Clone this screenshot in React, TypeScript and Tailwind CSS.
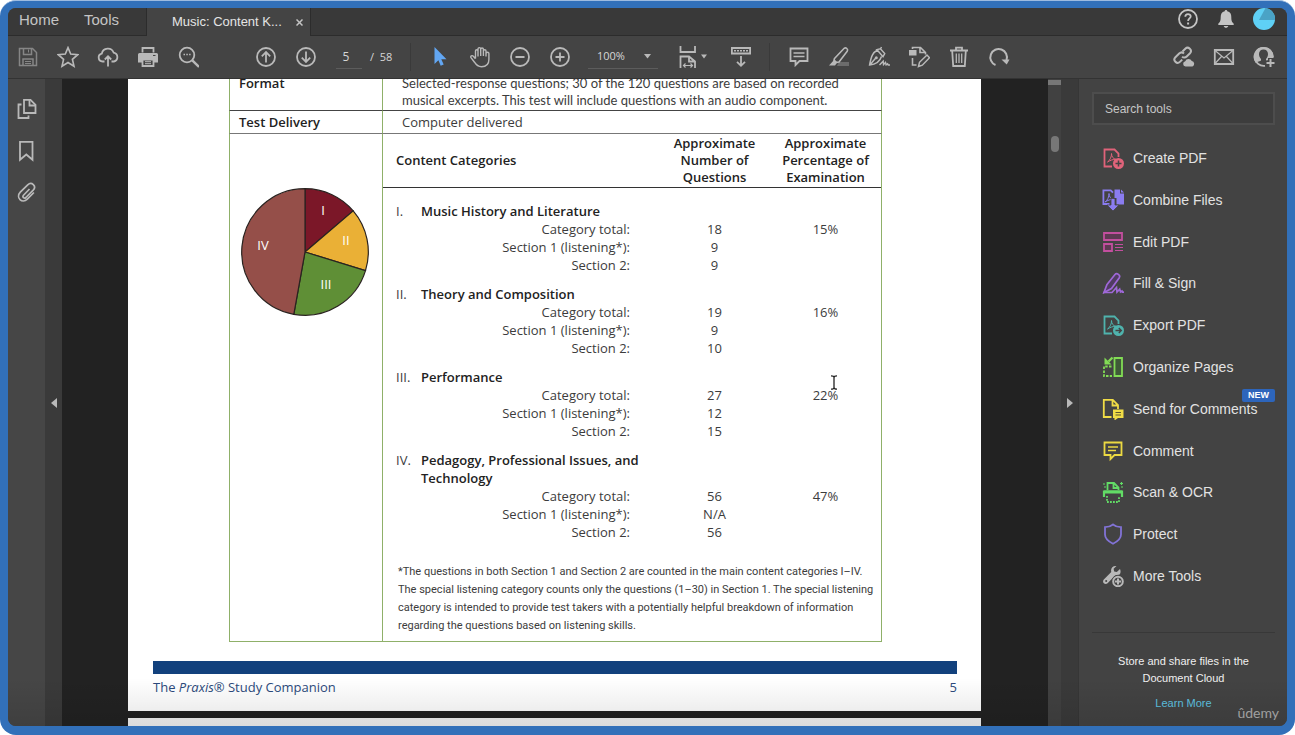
import type { ReactNode } from 'react';

type Sub = { label: string; count: string; percent?: string };
type Category = { numeral: string; name: ReactNode; rows: Sub[] };

const categories: Category[] = [
  {
    numeral: 'I.',
    name: 'Music History and Literature',
    rows: [
      { label: 'Category total:', count: '18', percent: '15%' },
      { label: 'Section 1 (listening*):', count: '9' },
      { label: 'Section 2:', count: '9' },
    ],
  },
  {
    numeral: 'II.',
    name: 'Theory and Composition',
    rows: [
      { label: 'Category total:', count: '19', percent: '16%' },
      { label: 'Section 1 (listening*):', count: '9' },
      { label: 'Section 2:', count: '10' },
    ],
  },
  {
    numeral: 'III.',
    name: 'Performance',
    rows: [
      { label: 'Category total:', count: '27', percent: '22%' },
      { label: 'Section 1 (listening*):', count: '12' },
      { label: 'Section 2:', count: '15' },
    ],
  },
  {
    numeral: 'IV.',
    name: (
      <>
        Pedagogy, Professional Issues, and
        <br />
        Technology
      </>
    ),
    rows: [
      { label: 'Category total:', count: '56', percent: '47%' },
      { label: 'Section 1 (listening*):', count: 'N/A' },
      { label: 'Section 2:', count: '56' },
    ],
  },
];

function Icon({ children, className = '' }: { children: ReactNode; className?: string }) {
  return (
    <svg
      width="22"
      height="22"
      viewBox="0 0 22 22"
      fill="none"
      stroke="currentColor"
      strokeWidth="1.8"
      className={`shrink-0 ${className}`}
      aria-hidden="true"
    >
      {children}
    </svg>
  );
}

const icons = {
  save: (
    <Icon className="text-[#868686]">
      <path d="M2.5 2.5h13l4 4v13h-17z" strokeWidth="1.5" />
      <path d="M6.5 2.5v6h8v-6M6 19.5V13h10v6.5" strokeWidth="1.5" />
      <path d="M11.5 3.5v3M8 15.5h6M8 17.5h6" strokeWidth="1" />
    </Icon>
  ),
  star: (
    <Icon>
      <path d="M11 1.6l2.7 6.5 7 .6-5.3 4.6 1.6 6.9-6-3.7-6 3.7 1.6-6.9L1.3 8.7l7-.6z" strokeWidth="1.6" />
    </Icon>
  ),
  upload: (
    <Icon>
      <path d="M7.5 15.5H5.6A4 4 0 0 1 4.8 7.6 6.2 6.2 0 0 1 16.7 6.7a4.5 4.5 0 0 1 .2 8.8H14.5" />
      <path d="M11 20.5V11M7.8 13.5l3.2-3.2 3.2 3.2" />
    </Icon>
  ),
  print: (
    <Icon>
      <path d="M5.5 6.5V2h11v4.5" />
      <path d="M2.5 7h17A1.5 1.5 0 0 1 21 8.5v8h-4v-3H5v3H1v-8A1.5 1.5 0 0 1 2.5 7z" fill="currentColor" stroke="none" />
      <path d="M5.5 13.5h11V20h-11z" />
      <path d="M8 15.7h6M8 17.7h6" strokeWidth="1" />
      <path d="M16 9.5h2.5" stroke="#444" strokeWidth="1.2" />
    </Icon>
  ),
  search: (
    <Icon>
      <circle cx="10" cy="9" r="7.3" />
      <path d="M15.3 14.3L22 21" strokeWidth="2.4" />
      <path d="M6.5 8.5H8M9.3 8.5h1.5M12.1 8.5h1.5" strokeWidth="1.4" />
    </Icon>
  ),
  up: (
    <Icon>
      <circle cx="11" cy="11" r="9" />
      <path d="M11 16.5v-10M6.8 10.3L11 6.1l4.2 4.2" />
    </Icon>
  ),
  down: (
    <Icon>
      <circle cx="11" cy="11" r="9" />
      <path d="M11 5.5v10M6.8 11.7l4.2 4.2 4.2-4.2" />
    </Icon>
  ),
  pointer: (
    <Icon className="text-[#62a6f2]">
      <path d="M5.5 1v17l3.9-3.7 2.3 5.4 3-1.3-2.4-5.2h5.2z" fill="currentColor" stroke="none" />
    </Icon>
  ),
  hand: (
    <Icon>
      <path
        d="M6.5 12.5V5C6.5 3.3 9 3.3 9 5v5.5V3c0-1.8 2.7-1.8 2.7 0v7V3.3c0-1.8 2.7-1.8 2.7 0V10V5c0-1.7 2.6-1.7 2.6 0v5.5M17 7.5c0-1.7 2.9-1.7 2.9 0v6c0 4.3-2.3 7.2-7.4 7.2-4 0-5.5-2-7-4.5L2 11.7c-1-1.6 1.1-2.8 2.3-1.5l2.2 2.6"
        strokeWidth="1.4"
      />
    </Icon>
  ),
  minus: (
    <Icon>
      <circle cx="11" cy="11" r="9" />
      <path d="M6.5 11h9" />
    </Icon>
  ),
  plus: (
    <Icon>
      <circle cx="11" cy="11" r="9" />
      <path d="M6.5 11h9M11 6.5v9" />
    </Icon>
  ),
  fit: (
    <svg width="28" height="22" viewBox="0 0 28 22" fill="none" stroke="currentColor" strokeWidth="1.8" aria-hidden="true">
      <path d="M1.5 0v6H16V0M1.5 22V10.5H10l6 5V22M10 10.5v5h6" />
      <path d="M4 19.5h10M6.5 17.5l-2 2 2 2M11.5 17.5l2 2-2 2" strokeWidth="1.2" />
      <path d="M22 8.5h6l-3 4z" fill="currentColor" stroke="none" />
    </svg>
  ),
  reading: (
    <Icon>
      <path d="M1.9 2h18.2v5.5H1.9z" />
      <path d="M4 4.8h14" strokeWidth="1.6" strokeDasharray="2 1" />
      <path d="M11 10v9.5M7 15.8l4 4 4-4" />
    </Icon>
  ),
  comment: (
    <Icon>
      <path d="M2.5 2.5h17V15h-8l-4 4v-4h-5z" />
      <path d="M5.5 7h11M5.5 10.5h11" strokeWidth="1.4" />
    </Icon>
  ),
  highlight: (
    <Icon>
      <path d="M11 16h10v4H9z" fill="#6c6c6c" stroke="none" />
      <path d="M6.5 12.5L16.2 2.3c1.6-1.4 4.4.9 3 3L11 16l-2.5.3L6 14.2z" strokeWidth="1.6" />
      <path d="M6 14l3.2 2.6L7 19.5H1z" fill="currentColor" stroke="none" />
    </Icon>
  ),
  sign: (
    <Icon>
      <path d="M9.5 4C5 6.5 3.3 9.5 1.6 19c5.5-.5 10-2.5 11.9-8.5M8.8 3.6l6.2 7.2 1.7-3.2-4.3-4.8zM12.5 3l1-2M2 18.8l6-7" strokeWidth="1.5" />
      <circle cx="8.3" cy="11.7" r="1.5" fill="currentColor" stroke="none" />
      <path d="M11.5 19l3.7-3.8.3 3.5 2-2.2.6 2.3 1.5-1 .6 1.2H22" strokeWidth="1.4" />
    </Icon>
  ),
  edit: (
    <Icon>
      <path d="M1 4h7.5v5.5H1z" fill="currentColor" stroke="none" />
      <path d="M4.5 3V1.5h8l5 5v2M12 1.5v5h5M4.5 12v7h4" strokeWidth="1.6" />
      <path d="M10.5 20.5l1-4.2L19 9l2.5 2.7-7.2 7.5z" strokeWidth="1.5" />
    </Icon>
  ),
  trash: (
    <Icon>
      <path d="M2 4.5h18M8 4V1.6h6V4" />
      <path d="M4.2 5l1 15h11.6l1-15" />
      <path d="M8.3 7.5V17M11 7.5V17M13.7 7.5V17" strokeWidth="1.3" />
    </Icon>
  ),
  rotate: (
    <Icon>
      <path d="M7.5 19A8.3 8.3 0 1 1 18.5 14" strokeWidth="2" />
      <path d="M13.5 13.5h8l-2.8 5z" fill="currentColor" stroke="none" />
    </Icon>
  ),
  link: (
    <Icon>
      <path d="M9.5 5.5l2.8-2.8c3-2.8 7.5 1.5 4.7 4.5l-3.3 3.3c-1.5 1.5-3.5 1.2-4.6.1" strokeWidth="2" />
      <path d="M11 7.5C9.5 6 7.5 6.2 6.2 7.5l-3.8 3.8c-3 3 1.5 7.5 4.5 4.6l2.3-2.3" strokeWidth="2" />
      <path d="M12.5 20.5a2.7 2.7 0 0 1-.3-5.3 3.6 3.6 0 0 1 6.6-.2 2.9 2.9 0 0 1 .7 5.5z" fill="currentColor" stroke="none" />
    </Icon>
  ),
  mail: (
    <Icon>
      <path d="M1.8 4h18.4v14H1.8z" />
      <path d="M2 4.5l9 7.5 9-7.5M2 17.5l6.5-7M20 17.5l-6.5-7" strokeWidth="1.2" />
    </Icon>
  ),
  addUser: (
    <Icon>
      <path d="M12 19.8A9 9 0 1 1 19.8 11" />
      <path
        d="M10.5 1a9.8 9.8 0 0 0-7.8 15.8c1.5-1.2 4.8-1.6 5.3-2.3V13C6.5 11.5 6 9.8 6 8c0-2.8 1.7-4.6 4.5-4.6S15 5.2 15 8c0 1.8-.5 3.5-2 5v1.5h2V12h5.5A9.8 9.8 0 0 0 10.5 1z"
        fill="currentColor"
        stroke="none"
      />
      <path d="M17.5 12.5v8M13.5 16.5h8" stroke="#444" strokeWidth="4" />
      <path d="M17.5 13v8M13.5 17h8" strokeWidth="2" />
    </Icon>
  ),
  help: (
    <Icon>
      <circle cx="11" cy="11" r="9" />
      <path d="M8.3 8.7c0-3.6 5.5-3.3 5.4-.3 0 2-2.6 2-2.6 4.5" />
      <path d="M10.1 14.5h2v2h-2z" fill="currentColor" stroke="none" />
    </Icon>
  ),
  bell: (
    <Icon>
      <path
        d="M11 2c.9 0 1.3.6 1.3 1.3 3 .7 4 2.9 4 5.7 0 4 .7 5 2.4 6.7V17H3.3v-1.3C5 14 5.7 13 5.7 9c0-2.8 1-5 4-5.7C9.7 2.6 10.1 2 11 2zM8.7 18h4.6c-.5 2.4-4.1 2.4-4.6 0z"
        fill="currentColor"
        stroke="none"
      />
    </Icon>
  ),
  pages: (
    <Icon>
      <path d="M8 1.8h6.5l5 5V15H8z" />
      <path d="M13.5 2v5.5H19M5.5 6.5h-3V20h10v-2.5" />
    </Icon>
  ),
  bookmark: (
    <Icon>
      <path d="M4 1.8h12.5v18l-6.2-5.3L4 19.8z" />
    </Icon>
  ),
  clip: (
    <Icon>
      <path
        d="M13.5 7l-6 6.2c-1.5 1.8.7 3.8 2.4 2.3l7.3-7.4c3.7-4-1.6-9-5.5-5.3L4.3 10.2c-5 5.4 1.9 12 7 7l6.6-6.7"
        strokeWidth="1.7"
      />
    </Icon>
  ),
};

const acrobat = 'M5.5 15c2.5-1.5 4.2-5.5 4-8.5 0 3 1.7 5.5 4.5 5.8-3 0-5.8 1-8.5 2.7z';

const tools = [
  {
    name: 'Create PDF',
    icon: (
      <Icon className="text-[#e0637a]">
        <path d="M10 19.5H2.5v-17h10l4 4V10" />
        <path d={acrobat} strokeWidth="1" />
        <circle cx="16.5" cy="16.5" r="5.5" fill="currentColor" stroke="none" />
        <path d="M16.5 13.5v6M13.5 16.5h6" stroke="#434343" strokeWidth="1.5" />
      </Icon>
    ),
  },
  {
    name: 'Combine Files',
    icon: (
      <Icon className="text-[#8a7cf0]">
        <path d="M7.5 15H1.4V1.4h7.3L11 3.7" />
        <path d={acrobat} strokeWidth="1" transform="translate(-2.5 -2)" />
        <path d="M12.5.5H18v4h4v11h-7.5V9h-2z" fill="currentColor" stroke="none" />
        <path d="M19 .5l3 3h-3z" fill="currentColor" stroke="none" />
        <path d="M9 9.5h4V16h4l-6 6-6-6h4z" fill="currentColor" stroke="#434343" strokeWidth=".8" />
      </Icon>
    ),
  },
  {
    name: 'Edit PDF',
    icon: (
      <Icon className="text-[#c24f9e]">
        <path d="M2 2h18v7H2zM2 13h8v7H2z" fill="#5d3a53" />
        <path d="M13 13.5h8M13 16.5h8M13 19.5h8" strokeWidth="1.2" />
      </Icon>
    ),
  },
  {
    name: 'Fill & Sign',
    icon: (
      <Icon className="text-[#9f68d8]">
        <path d="M5 12.5l8-10c1.8-2 5.8.5 4.3 3.2L9.5 16.5l-7.5 4z" fill="#503c62" strokeWidth="1.7" />
        <path d="M1 20.5h9l4.5-5 .5 4.5 2.7-2.8.8 2.8 1.5-1 .5 1.2H22" strokeWidth="1.7" />
      </Icon>
    ),
  },
  {
    name: 'Export PDF',
    icon: (
      <Icon className="text-[#4fb3ad]">
        <path d="M10 19.5H2.5v-17h10l4 4V10" />
        <path d={acrobat} strokeWidth="1" />
        <circle cx="16.5" cy="16.5" r="5.5" fill="currentColor" stroke="none" />
        <path d="M13.5 16.5H19M16.8 14l2.5 2.5-2.5 2.5" stroke="#434343" strokeWidth="1.4" />
      </Icon>
    ),
  },
  {
    name: 'Organize Pages',
    icon: (
      <Icon className="text-[#82dc55]">
        <path d="M12.5 2H20v18h-7.5z" fill="#3f5a38" />
        <path d="M9.5 10.5H2V20h8" strokeDasharray="2.5 1.3" />
        <path d="M10.5 1.5l-4 4" strokeWidth="2.4" />
        <path d="M2.5 1.5v7h7z" fill="currentColor" stroke="none" />
      </Icon>
    ),
  },
  {
    name: 'Send for Comments',
    badge: 'NEW',
    icon: (
      <Icon className="text-[#f0dc46]">
        <path d="M9.5 19H1.8V1.8h9L16 7v4M10.5 2v5.5H16" />
        <path d="M11 11.5h10.5V20H16l-3.5 2.5V20H11z" fill="currentColor" stroke="none" />
        <path d="M13.5 14.5H19M13.5 17H19" stroke="#5c572e" strokeWidth="1.1" />
      </Icon>
    ),
  },
  {
    name: 'Comment',
    icon: (
      <Icon className="text-[#ecd942]">
        <path d="M2.5 2.5h17V15h-7l-4 4v-4h-6z" />
        <path d="M6 7h10M6 10.5h8" strokeWidth="1.5" />
      </Icon>
    ),
  },
  {
    name: 'Scan & OCR',
    icon: (
      <Icon className="text-[#62dc66]">
        <path d="M5.5 9V2H12l4.5 4.5V9M11.5 2.5V7h5" />
        <path d="M2 16v-5.5h18V16" strokeWidth="2.2" />
        <path d="M2 11h18" strokeWidth="3" />
        <path d="M5 15v6h12v-6" strokeDasharray="1.8 1.2" />
        <path d="M1 3h2M2 6h2M18 2.5h3M19.5 1v3M19 6h2" strokeWidth="1.2" />
      </Icon>
    ),
  },
  {
    name: 'Protect',
    icon: (
      <Icon className="text-[#8273d6]">
        <path d="M11 1.5c2.5 2 5 2.7 8 2.7v7.3c0 4-3.5 7-8 9.3-4.5-2.3-8-5.3-8-9.3V4.2c3 0 5.5-.7 8-2.7z" />
      </Icon>
    ),
  },
  {
    name: 'More Tools',
    icon: (
      <Icon className="text-[#b9b9b9]">
        <path
          d="M14.5 1c-3.7-.6-6.3 2.5-5.2 6L1.8 14.5c-2.3 2.8 1.2 5.8 3.8 3.7l6-6.2c1-1.7 3.5-2.5 5.5-2.2C18.7 8.5 19 6 18 4l-3.2 3-2.6-.6-.6-2.6z"
          fill="currentColor"
          stroke="none"
        />
        <circle cx="4.2" cy="16" r="1" fill="#434343" stroke="none" />
        <circle cx="16" cy="16.5" r="6.5" fill="#434343" stroke="none" />
        <circle cx="16" cy="16.5" r="4.8" fill="#434343" strokeWidth="2" />
        <path d="M16 13.5v6M13 16.5h6" strokeWidth="2" />
      </Icon>
    ),
  },
];

function ToolButton({ label, children }: { label: string; children: ReactNode }) {
  return (
    <button type="button" aria-label={label} className="flex h-10 w-10 shrink-0 items-center justify-center text-[#b9b9b9]">
      {children}
    </button>
  );
}

function TabBar() {
  return (
    <header className="flex h-7 shrink-0 bg-[#393939] text-[#c4c4c4]">
      <nav className="flex w-[139px] items-start gap-[25px] border-r border-b border-[#2c2c2c] pl-[11px] text-[15px] leading-[23px]">
        <a href="#home">Home</a>
        <a href="#tools">Tools</a>
      </nav>
      <div className="flex w-[163px] items-center gap-[14px] bg-[#444444] pl-[25px] text-[13px] leading-[26px] text-[#e4e4e4]">
        <span className="whitespace-nowrap">Music: Content K...</span>
        <button type="button" aria-label="Close tab">
          <svg width="7" height="7" viewBox="0 0 7 7" stroke="#c4c4c4" strokeWidth="1.5" aria-hidden="true">
            <path d="M.5.5l6 6M6.5.5l-6 6" />
          </svg>
        </button>
      </div>
      <div className="flex flex-1 items-start justify-end gap-4 border-b border-l border-[#2c2c2c] pr-3 text-[#c4c4c4]">
        <button type="button" aria-label="Help">{icons.help}</button>
        <button type="button" aria-label="Notifications">{icons.bell}</button>
        <button type="button" aria-label="Account">
          <svg width="22" height="22" viewBox="0 0 22 22" aria-hidden="true">
            <circle cx="11" cy="11" r="11" fill="#5fd0f5" />
            <path d="M12.5 0A11 11 0 0 1 22 12H6z" fill="#4aa3c6" />
          </svg>
        </button>
      </div>
    </header>
  );
}

function Toolbar() {
  return (
    <div className="flex h-[43px] shrink-0 items-center border-b border-[#333333] bg-[#444444] font-['Open_Sans',sans-serif] text-xs text-[#d6d6d6]">
      <ToolButton label="Save">{icons.save}</ToolButton>
      <ToolButton label="Star">{icons.star}</ToolButton>
      <ToolButton label="Upload">{icons.upload}</ToolButton>
      <ToolButton label="Print">{icons.print}</ToolButton>
      <ToolButton label="Find">{icons.search}</ToolButton>
      <div className="ml-[38px] flex items-center">
        <ToolButton label="Previous page">{icons.up}</ToolButton>
        <ToolButton label="Next page">{icons.down}</ToolButton>
      </div>
      <input
        aria-label="Page number"
        defaultValue="5"
        className="ml-[10px] h-6 w-[26px] border-b border-[#5c5c5c] bg-transparent pr-[6px] text-center outline-none"
      />
      <span className="ml-2 w-6 text-[11px] whitespace-pre">/  58</span>
      <span className="ml-4 h-7 w-px bg-[#3a3a3a]" />
      <div className="ml-[9px] flex items-center">
        <ToolButton label="Select">{icons.pointer}</ToolButton>
        <ToolButton label="Pan">{icons.hand}</ToolButton>
        <ToolButton label="Zoom out">{icons.minus}</ToolButton>
        <ToolButton label="Zoom in">{icons.plus}</ToolButton>
      </div>
      <label className="ml-2 flex h-6 w-[70px] items-center border-b border-[#5c5c5c] text-[11px]">
        <select aria-label="Zoom level" defaultValue="100%" className="w-[52px] appearance-none bg-transparent pl-[9px] outline-none">
          <option>100%</option>
        </select>
        <svg width="7" height="5" viewBox="0 0 7 5" className="ml-1" aria-hidden="true">
          <path d="M0 0h7L3.5 4.5z" fill="#b9b9b9" />
        </svg>
      </label>
      <div className="ml-[15px] flex items-center gap-2">
        <ToolButton label="Fit page">{icons.fit}</ToolButton>
        <ToolButton label="Reading mode">{icons.reading}</ToolButton>
      </div>
      <span className="ml-2 h-7 w-px bg-[#3a3a3a]" />
      <div className="ml-[9px] flex items-center">
        <ToolButton label="Add comment">{icons.comment}</ToolButton>
        <ToolButton label="Highlight">{icons.highlight}</ToolButton>
        <ToolButton label="Sign">{icons.sign}</ToolButton>
        <ToolButton label="Edit page">{icons.edit}</ToolButton>
        <ToolButton label="Delete">{icons.trash}</ToolButton>
        <ToolButton label="Rotate">{icons.rotate}</ToolButton>
      </div>
      <div className="ml-auto flex items-center pr-[3px]">
        <ToolButton label="Share link">{icons.link}</ToolButton>
        <ToolButton label="Email">{icons.mail}</ToolButton>
        <ToolButton label="Add people">{icons.addUser}</ToolButton>
      </div>
    </div>
  );
}

function PieChart() {
  return (
    <svg
      width="128"
      height="128"
      viewBox="0 0 128 128"
      role="img"
      aria-label="Share of each content category"
      className="ml-[11px] font-['Open_Sans',sans-serif] text-[13px]"
    >
      <g stroke="#2a2320" strokeWidth="1.2">
        <path d="M64 64V.7A63.3 63.3 0 0 1 112.2 22.9z" fill="#7b1728" />
        <path d="M64 64L112.2 22.9A63.3 63.3 0 0 1 124.5 82.6z" fill="#eab036" />
        <path d="M64 64L124.5 82.6A63.3 63.3 0 0 1 52.8 126.3z" fill="#5f8f36" />
        <path d="M64 64L52.8 126.3A63.3 63.3 0 0 1 64 .7z" fill="#954f49" />
      </g>
      <g fill="#fff" textAnchor="middle">
        <text x="82" y="27">I</text>
        <text x="105" y="57">II</text>
        <text x="85" y="101">III</text>
        <text x="22" y="62">IV</text>
      </g>
    </svg>
  );
}

function CategoryTable() {
  return (
    <table className="w-full table-fixed border-separate border-spacing-0 leading-[18px]">
      <colgroup>
        <col />
        <col className="w-[111px]" />
        <col className="w-[111px]" />
      </colgroup>
      <thead>
        <tr className="h-[54px] leading-[17px] text-[#222]">
          <th scope="col" className="border-b border-[#333] p-0 pl-[13px] text-left font-semibold">Content Categories</th>
          <th scope="col" className="border-b border-[#333] p-0 font-semibold">Approximate Number of Questions</th>
          <th scope="col" className="border-b border-[#333] p-0 font-semibold">Approximate Percentage of Examination</th>
        </tr>
      </thead>
      {categories.map((category, i) => (
        <tbody key={category.numeral}>
          <tr>
            <th scope="rowgroup" colSpan={3} className={`p-0 pl-[13px] text-left font-normal ${i === 0 ? 'pt-[14px]' : 'pt-[11px]'}`}>
              <div className="flex">
                <span className="w-[25px]">{category.numeral}</span>
                <span className="font-semibold text-[#222]">{category.name}</span>
              </div>
            </th>
          </tr>
          {category.rows.map((row) => (
            <tr key={row.label}>
              <td className="p-0 pr-[29px] text-right">{row.label}</td>
              <td className="p-0 text-center">{row.count}</td>
              <td className="p-0 text-center">{row.percent}</td>
            </tr>
          ))}
        </tbody>
      ))}
    </table>
  );
}

function Page() {
  return (
    <article className="-mt-6 flex w-full max-w-[853px] flex-col bg-white pt-5 font-['Open_Sans',sans-serif] text-[13px] text-[#3c3c3c]">
      <div className="mr-[99px] ml-[101px]">
        <table className="w-full table-fixed border-separate border-spacing-0 leading-[17px]">
          <colgroup>
            <col className="w-[154px]" />
            <col />
          </colgroup>
          <tbody>
            <tr className="align-top">
              <th scope="row" className="border-x border-b border-x-[#8fb069] border-b-[#444] p-0 pl-[9px] text-left font-semibold text-[#222]">Format</th>
              <td className="border-r border-b border-r-[#8fb069] border-b-[#444] p-0 pb-px pl-[19px] font-['Lato',sans-serif] whitespace-nowrap">
                Selected-response questions; 30 of the 120 questions are based on recorded
                <br />
                musical excerpts. This test will include questions with an audio component.
              </td>
            </tr>
            <tr className="h-[23px]">
              <th scope="row" className="border-x border-b border-x-[#8fb069] border-b-[#777] p-0 pl-[9px] text-left font-semibold text-[#222]">Test Delivery</th>
              <td className="border-r border-b border-r-[#8fb069] border-b-[#777] p-0 pl-[19px]">Computer delivered</td>
            </tr>
            <tr className="align-top">
              <td className="border-x border-b border-[#8fb069] p-0 pt-[54px]">
                <PieChart />
              </td>
              <td className="border-r border-b border-[#8fb069] p-0 pb-[6px]">
                <CategoryTable />
                <p className="mt-[22px] pl-[15px] font-['Roboto',sans-serif] text-[11px] leading-[18px] whitespace-nowrap">
                  *The questions in both Section 1 and Section 2 are counted in the main content categories I–IV.
                  <br />
                  The special listening category counts only the questions (1–30) in Section 1. The special listening
                  <br />
                  category is intended to provide test takers with a potentially helpful breakdown of information
                  <br />
                  regarding the questions based on listening skills.
                </p>
              </td>
            </tr>
          </tbody>
        </table>
      </div>
      <footer className="mt-[19px] mr-6 mb-[13px] ml-[25px] text-[#2c4a7c]">
        <div className="h-[13px] bg-[#12417d]" />
        <div className="mt-[2px] flex justify-between leading-[22px]">
          <span>
            The <i>Praxis</i>® Study Companion
          </span>
          <span>5</span>
        </div>
      </footer>
    </article>
  );
}

function PanelToggle({ label, path }: { label: string; path: string }) {
  return (
    <button type="button" aria-label={label} className="flex w-[17px] shrink-0 items-center justify-center bg-[#3a3a3a]">
      <svg width="6" height="10" viewBox="0 0 6 10" fill="#b9b9b9" aria-hidden="true">
        <path d={path} />
      </svg>
    </button>
  );
}

function Viewer() {
  return (
    <main className="relative flex min-w-0 flex-1 bg-[#222222]">
      <div className="flex flex-1 flex-col items-center overflow-hidden pr-px">
        <Page />
        <div className="mt-[7px] w-full max-w-[853px] flex-1 bg-[#f4f4f4]" />
      </div>
      <div className="flex w-[13px] shrink-0 flex-col items-center bg-[#414141]">
        <span className="mt-px h-[5px] w-full bg-[#777777]" />
        <span className="mt-[51px] h-4 w-2 rounded-full bg-[#777777]" />
      </div>
      {/* text cursor resting over the page */}
      <svg width="8" height="15" viewBox="0 0 8 15" fill="none" stroke="#222" className="absolute top-[296px] left-[768px]" aria-hidden="true">
        <path d="M1 .8c1.8 0 3 .5 3 1.7C4 1.3 5.2.8 7 .8M4 2.5v10M1 14.2c1.8 0 3-.5 3-1.7 0 1.2 1.2 1.7 3 1.7" strokeWidth="1.3" />
      </svg>
    </main>
  );
}

function ToolsPanel() {
  return (
    <aside className="flex w-[209px] shrink-0 flex-col border-l border-[#363636] bg-[#434343] pt-[13px] pr-3 pl-[13px]">
      <input
        type="search"
        aria-label="Search tools"
        placeholder="Search tools"
        className="mb-3 h-[33px] w-full border-2 border-[#4d4d4d] bg-[#3d3d3d] px-[11px] text-xs outline-none placeholder:text-[#c6c6c6]"
      />
      <ul className="mb-[35px] flex flex-1 flex-col">
        {tools.map((tool) => (
          <li key={tool.name} className="relative flex flex-1">
            <button type="button" className="flex flex-1 items-center gap-[9px] pl-[10px] text-sm whitespace-nowrap text-[#e2e2e2]">
              {tool.icon}
              {tool.name}
            </button>
            {tool.badge && (
              <span className="absolute top-px right-0 rounded-[2px] bg-[#2d65bb] px-[6px] text-[9px] leading-[13px] font-bold text-white">
                {tool.badge}
              </span>
            )}
          </li>
        ))}
      </ul>
      <div className="border-t border-[#383838] pt-5 pb-[14px] text-center text-[11px] leading-[17px] text-[#f0f0f0]">
        <p>
          Store and share files in the
          <br />
          Document Cloud
        </p>
        <a href="#learn-more" className="mt-2 block text-[#5fc4e2]">Learn More</a>
      </div>
    </aside>
  );
}

export default function App() {
  return (
    <div className="flex h-screen rounded-[16px] border-t border-[#9dbbe0] bg-[#3270b9] px-2 pt-[7px] pb-[9px] font-['Liberation_Sans',Arial,sans-serif]">
      <div className="relative flex flex-1 flex-col overflow-hidden rounded-lg bg-[#444444]">
        <TabBar />
        <Toolbar />
        <div className="flex min-h-0 flex-1">
          <nav aria-label="Document panes" className="flex w-[37px] shrink-0 flex-col items-center bg-[#464646] pt-[9px] text-[#b9b9b9]">
            <button type="button" aria-label="Page thumbnails" className="h-[42px]">{icons.pages}</button>
            <button type="button" aria-label="Bookmarks" className="h-[42px]">{icons.bookmark}</button>
            <button type="button" aria-label="Attachments" className="h-[42px]">{icons.clip}</button>
          </nav>
          <PanelToggle label="Expand panes" path="M6 0v10L0 5z" />
          <Viewer />
          <PanelToggle label="Collapse tools" path="M0 0v10l6-5z" />
          <ToolsPanel />
        </div>
        <div className="pointer-events-none absolute inset-x-0 bottom-0 h-12 bg-linear-to-t from-black/10 to-transparent" />
        <span className="absolute right-2 bottom-[3px] font-['Lato',sans-serif] text-sm leading-5 text-[#a0a0a0]">ûdemy</span>
      </div>
    </div>
  );
}
